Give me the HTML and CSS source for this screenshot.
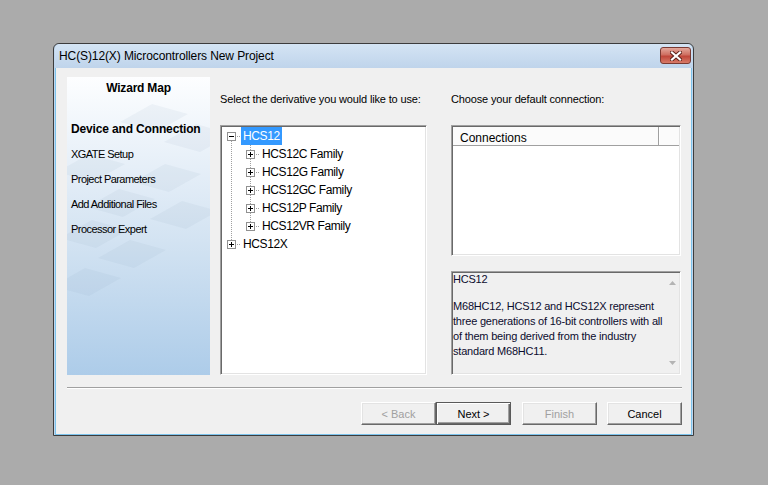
FILE: index.html
```html
<!DOCTYPE html>
<html>
<head>
<meta charset="utf-8">
<title>HC(S)12(X) Microcontrollers New Project</title>
<link rel="stylesheet" href="styles.css">
</head>
<body>
<div class="window">
  <div class="titlebar">
    <span class="title">HC(S)12(X) Microcontrollers New Project</span>
    <div class="close">
      <svg width="12" height="10" viewBox="0 0 12 10">
        <path d="M2 1.5 L10 8.5 M10 1.5 L2 8.5" stroke="#5b2019" stroke-width="4" stroke-linecap="square"/>
        <path d="M2 1.5 L10 8.5 M10 1.5 L2 8.5" stroke="#ffffff" stroke-width="2.2" stroke-linecap="square"/>
      </svg>
    </div>
  </div>
  <div class="client">
    <div class="main">
      <div class="wizmap">
        <svg class="wizbg" width="143" height="298" viewBox="0 0 143 298">
          <g fill="#6f8aa8" fill-opacity="0.07">
            <polygon points="53,45 85,27 121,37 89,55"/>
            <polygon points="97,65 129,47 165,57 133,75"/>
            <polygon points="-10,95 22,77 58,87 26,105"/>
            <polygon points="66,105 98,87 134,97 102,115"/>
            <polygon points="20,130 52,112 88,122 56,140"/>
            <polygon points="83,142 115,124 151,134 119,152"/>
            <polygon points="-7,161 25,143 61,153 29,171"/>
            <polygon points="31,181 63,163 99,173 67,191"/>
            <polygon points="-14,209 18,191 54,201 22,219"/>
          </g>
        </svg>
        <div class="wiz-title">Wizard Map</div>
        <ul class="steps">
          <li class="current">Device and Connection</li>
          <li>XGATE Setup</li>
          <li>Project Parameters</li>
          <li>Add Additional Files</li>
          <li>Processor Expert</li>
        </ul>
      </div>

      <div class="col mid">
        <div class="label">Select the derivative you would like to use:</div>
        <div class="tree sunken">
          <div class="tree-content">
            <div class="row">
              <svg class="exp" width="9" height="9" viewBox="0 0 9 9"><rect x="0.5" y="0.5" width="8" height="8" fill="#fff" stroke="#919191"/><path d="M2 4.5 H7" stroke="#000"/></svg>
              <span class="dash"></span>
              <span class="node sel">HCS12</span>
            </div>
            <div class="children">
              <div class="row child">
                <svg class="exp" width="9" height="9" viewBox="0 0 9 9"><rect x="0.5" y="0.5" width="8" height="8" fill="#fff" stroke="#919191"/><path d="M2 4.5 H7 M4.5 2 V7" stroke="#000"/></svg>
                <span class="dash"></span>
                <span class="node">HCS12C Family</span>
              </div>
              <div class="row child">
                <svg class="exp" width="9" height="9" viewBox="0 0 9 9"><rect x="0.5" y="0.5" width="8" height="8" fill="#fff" stroke="#919191"/><path d="M2 4.5 H7 M4.5 2 V7" stroke="#000"/></svg>
                <span class="dash"></span>
                <span class="node">HCS12G Family</span>
              </div>
              <div class="row child">
                <svg class="exp" width="9" height="9" viewBox="0 0 9 9"><rect x="0.5" y="0.5" width="8" height="8" fill="#fff" stroke="#919191"/><path d="M2 4.5 H7 M4.5 2 V7" stroke="#000"/></svg>
                <span class="dash"></span>
                <span class="node">HCS12GC Family</span>
              </div>
              <div class="row child">
                <svg class="exp" width="9" height="9" viewBox="0 0 9 9"><rect x="0.5" y="0.5" width="8" height="8" fill="#fff" stroke="#919191"/><path d="M2 4.5 H7 M4.5 2 V7" stroke="#000"/></svg>
                <span class="dash"></span>
                <span class="node">HCS12P Family</span>
              </div>
              <div class="row child">
                <svg class="exp" width="9" height="9" viewBox="0 0 9 9"><rect x="0.5" y="0.5" width="8" height="8" fill="#fff" stroke="#919191"/><path d="M2 4.5 H7 M4.5 2 V7" stroke="#000"/></svg>
                <span class="dash"></span>
                <span class="node">HCS12VR Family</span>
              </div>
            </div>
            <div class="row">
              <svg class="exp" width="9" height="9" viewBox="0 0 9 9"><rect x="0.5" y="0.5" width="8" height="8" fill="#fff" stroke="#919191"/><path d="M2 4.5 H7 M4.5 2 V7" stroke="#000"/></svg>
              <span class="dash"></span>
              <span class="node">HCS12X</span>
            </div>
          </div>
        </div>
      </div>

      <div class="col right">
        <div class="label">Choose your default connection:</div>
        <div class="list sunken">
          <div class="lv-head">
            <div class="lv-col">Connections</div>
            <div class="lv-rest"></div>
          </div>
        </div>
        <div class="desc sunken">
          <div class="desc-text">
            <p class="p1">HCS12</p>
            <p class="p2">M68HC12, HCS12 and HCS12X represent<br>three generations of 16-bit controllers with all<br>of them being derived from the industry<br>standard M68HC11.</p>
          </div>
          <div class="vscroll">
            <svg width="7" height="4" viewBox="0 0 7 4"><path d="M0 4 L3.5 0 L7 4 Z" fill="#b4b4b4"/></svg>
            <svg width="7" height="4" viewBox="0 0 7 4"><path d="M0 0 L3.5 4 L7 0 Z" fill="#b4b4b4"/></svg>
          </div>
        </div>
      </div>
    </div>

    <div class="sep"></div>

    <div class="buttons">
      <button class="btn disabled back">&lt; Back</button>
      <button class="btn default next">Next &gt;</button>
      <button class="btn disabled finish">Finish</button>
      <button class="btn cancel">Cancel</button>
    </div>
  </div>
</div>
</body>
</html>
```

FILE: styles.css
```css
* { box-sizing: border-box; }

html, body {
  margin: 0;
  padding: 0;
}

body {
  width: 768px;
  height: 485px;
  overflow: hidden;
  background: #ababab;
  font-family: "Liberation Sans", Arial, sans-serif;
  font-size: 11px;
  color: #000;
}

/* ---------- window frame ---------- */
.window {
  margin: 43px 0 0 53px;
  width: 641px;
  height: 393px;
  border: 1px solid #3c3c3c;
  border-radius: 6px 6px 0 0;
  background: #c2d7ed;
  padding: 0 1px;
  display: flex;
  flex-direction: column;
}

.titlebar {
  height: 24px;
  flex: none;
  display: flex;
  justify-content: space-between;
  align-items: flex-start;
  padding: 0 1px 0 4px;
  background: linear-gradient(#d4e4f4, #bfd4eb);
  border-radius: 5px 5px 0 0;
}

.title {
  font-size: 12px;
  line-height: 24px;
  letter-spacing: -0.1px;
  color: #000;
}

.close {
  margin-top: 3px;
  width: 31px;
  height: 17px;
  border: 1px solid #7a3a32;
  border-radius: 3px;
  background: linear-gradient(#e3a89c 0%, #cf6f61 45%, #c0473a 55%, #d77a68 100%);
  display: flex;
  align-items: center;
  justify-content: center;
}

.client {
  flex: 1;
  background: #f0f0f0;
  border: 1px solid #7cc3ec;
  border-top: none;
  padding: 9px 9px 0 11px;
  display: flex;
  flex-direction: column;
}

.main {
  height: 298px;
  display: flex;
  flex: none;
}

/* ---------- wizard map ---------- */
.wizmap {
  position: relative;
  width: 143px;
  flex: none;
  background: linear-gradient(#fdfeff 0%, #e6eff8 30%, #d3e3f2 55%, #adcce9 100%);
  overflow: hidden;
}

.wizbg {
  position: absolute;
  left: 0;
  top: 0;
}

.wiz-title {
  position: relative;
  margin-top: 4px;
  text-align: center;
  font-weight: bold;
  font-size: 12px;
  line-height: 14px;
  letter-spacing: -0.2px;
}

.steps {
  position: relative;
  list-style: none;
  margin: 22px 0 0 0;
  padding: 0 0 0 4px;
}

.steps li {
  height: 25px;
  line-height: 25px;
  font-size: 11px;
  letter-spacing: -0.55px;
  white-space: nowrap;
}

.steps li.current {
  font-weight: bold;
  font-size: 12px;
  letter-spacing: -0.15px;
}

/* ---------- columns ---------- */
.col {
  display: flex;
  flex-direction: column;
  flex: none;
}

.mid {
  margin-left: 10px;
  width: 207px;
}

.right {
  margin-left: 24px;
  width: 230px;
}

.label {
  height: 48px;
  padding-top: 16px;
  line-height: 13px;
  font-size: 11px;
  letter-spacing: -0.15px;
  white-space: nowrap;
}

.sunken {
  border: 1px solid;
  border-color: #a0a0a0 #ffffff #ffffff #a0a0a0;
  box-shadow: inset 1px 1px #696969, inset -1px -1px #e3e3e3;
  padding: 1px;
}

/* ---------- tree ---------- */
.tree {
  height: 250px;
  background: #fff;
}

.tree-content {
  background-image: repeating-linear-gradient(to bottom, #a0a0a0 0 1px, transparent 1px 2px);
  background-repeat: no-repeat;
  background-position: 9px 14px;
  background-size: 1px 99px;
}

.row {
  height: 18px;
  display: flex;
  align-items: center;
  padding-left: 5px;
}

.row.child {
  padding-left: 24px;
}

.children {
  background-image: repeating-linear-gradient(to bottom, #a0a0a0 0 1px, transparent 1px 2px);
  background-repeat: no-repeat;
  background-position: 28px 0;
  background-size: 1px 81px;
}

.exp {
  display: block;
  flex: none;
}

.dash {
  width: 5px;
  height: 1px;
  flex: none;
  background: repeating-linear-gradient(to right, transparent 0 1px, #a0a0a0 1px 2px);
}

.node {
  padding: 0 2px;
  height: 18px;
  line-height: 18px;
  font-size: 12px;
  letter-spacing: -0.4px;
  white-space: nowrap;
  color: #000;
}

.node.sel {
  background: #3399ff;
  color: #fff;
}

/* ---------- list view ---------- */
.list {
  height: 131px;
  background: #fff;
}

.lv-head {
  display: flex;
  height: 19px;
  border-bottom: 1px solid #a0a0a0;
  background: #fbfbfb;
}

.lv-col {
  width: 206px;
  height: 18px;
  padding-left: 7px;
  font-size: 12px;
  line-height: 22px;
  overflow: hidden;
  border-right: 1px solid #a0a0a0;
  box-shadow: 1px 0 #fff;
}

.lv-rest {
  flex: 1;
}

/* ---------- description ---------- */
.desc {
  margin-top: 15px;
  height: 104px;
  background: #f0f0f0;
  display: flex;
}

.desc-text {
  flex: 1;
  color: #0c0c2e;
  font-size: 11px;
  line-height: 15px;
  letter-spacing: -0.2px;
  white-space: nowrap;
}

.desc-text p {
  margin: 0;
}

.desc-text .p1 {
  margin-top: -1px;
}

.desc-text .p2 {
  margin-top: 12px;
}

.vscroll {
  width: 13px;
  flex: none;
  display: flex;
  flex-direction: column;
  justify-content: space-between;
  align-items: center;
  padding: 8px 0 8px;
}

.vscroll svg {
  display: block;
}

/* ---------- separator & buttons ---------- */
.sep {
  margin-top: 12px;
  height: 2px;
  flex: none;
  border-top: 1px solid #a0a0a0;
  border-bottom: 1px solid #ffffff;
}

.buttons {
  margin-top: 13px;
  display: flex;
  justify-content: flex-end;
  flex: none;
}

.btn {
  width: 75px;
  height: 23px;
  padding: 0;
  margin: 0;
  font-family: "Liberation Sans", Arial, sans-serif;
  font-size: 11px;
  color: #000;
  background: #f0f0f0;
  border: 1px solid;
  border-color: #ffffff #696969 #696969 #ffffff;
  box-shadow: inset -1px -1px #a0a0a0, inset 1px 1px #e3e3e3;
}

.btn.disabled {
  color: #a0a0a0;
}

.btn.default {
  border: 1px solid #5a5a5a;
  box-shadow: inset 1px 1px #ffffff, inset -1px -1px #696969, inset -2px -2px #a0a0a0;
}

.finish {
  margin-left: 11px;
}

.cancel {
  margin-left: 10px;
}
```
